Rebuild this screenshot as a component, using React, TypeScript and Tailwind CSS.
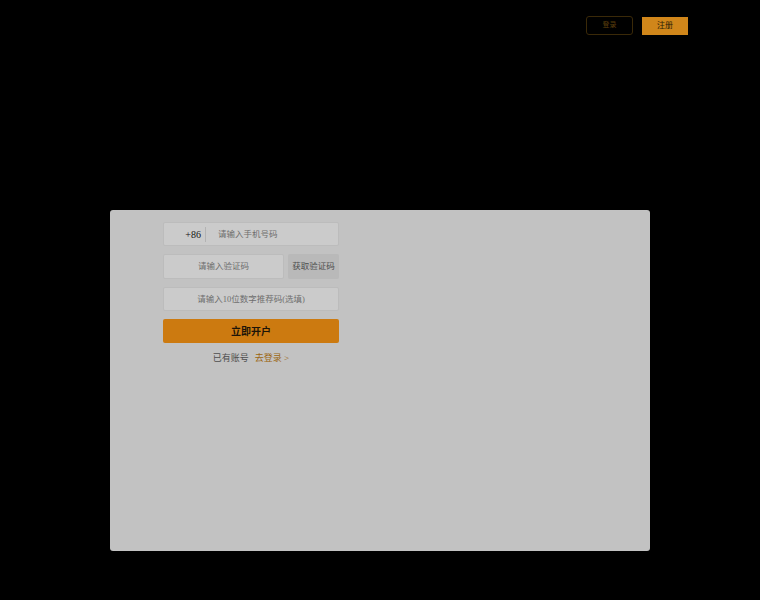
import React from 'react';

const font = { fontFamily: '"Liberation Serif", "Noto Sans CJK SC", serif' };

const App: React.FC = () => {
  return (
    <div className="w-[760px] h-[600px] bg-black flex flex-col" style={font}>
      {/* Header */}
      <div className="flex justify-end gap-[9px] pt-[16px] pr-[72px]">
        <button className="w-[47px] h-[19px] rounded-[3px] border border-[#3a2908] text-[7px] text-[#5c3f0c] leading-none">
          登录
        </button>
        <button className="w-[46px] h-[18px] mt-[1px] bg-[#d0861a] text-[8px] text-[#2a1d06] leading-none">
          注册
        </button>
      </div>

      {/* Panel */}
      <div className="mt-[175px] ml-[110px] w-[540px] h-[341px] rounded-[3px] bg-[#c2c2c2] pt-[12px] pl-[53px]">
        <div className="w-[176px] flex flex-col">
          <div className="h-[24px] flex items-center bg-[#cbcbcb] border border-[#bcbcbc] rounded-[2px]">
            <span className="w-[37px] text-right text-[10px] text-[#141414]">+86</span>
            <span className="ml-[4px] w-px h-[15px] bg-[#b3b3b3]"></span>
            <span className="ml-[12px] text-[8.5px] text-[#6e6e6e]">请输入手机号码</span>
          </div>

          <div className="mt-[8px] flex gap-[4px]">
            <div className="w-[121px] h-[25px] flex items-center justify-center bg-[#cbcbcb] border border-[#bcbcbc] rounded-[2px] text-[8.5px] text-[#6e6e6e]">
              请输入验证码
            </div>
            <div className="w-[51px] h-[25px] flex items-center justify-center bg-[#b9b9b9] rounded-[2px] text-[8.5px] text-[#4e4e4e]">
              获取验证码
            </div>
          </div>

          <div className="mt-[8px] h-[24px] flex items-center justify-center bg-[#cbcbcb] border border-[#bcbcbc] rounded-[2px] text-[8.5px] text-[#6e6e6e]">
            请输入10位数字推荐码(选填)
          </div>

          <button className="mt-[8px] h-[24px] bg-[#cc7a10] rounded-[2px] text-[10px] font-bold text-[#1d1508] flex items-center justify-center">
            立即开户
          </button>

          <div className="mt-[11px] flex justify-center gap-[6px] text-[9px] leading-none">
            <span className="text-[#4e4e4e]">已有账号</span>
            <span className="text-[#9c6610]">去登录 &gt;</span>
          </div>
        </div>
      </div>
    </div>
  );
};

export default App;
